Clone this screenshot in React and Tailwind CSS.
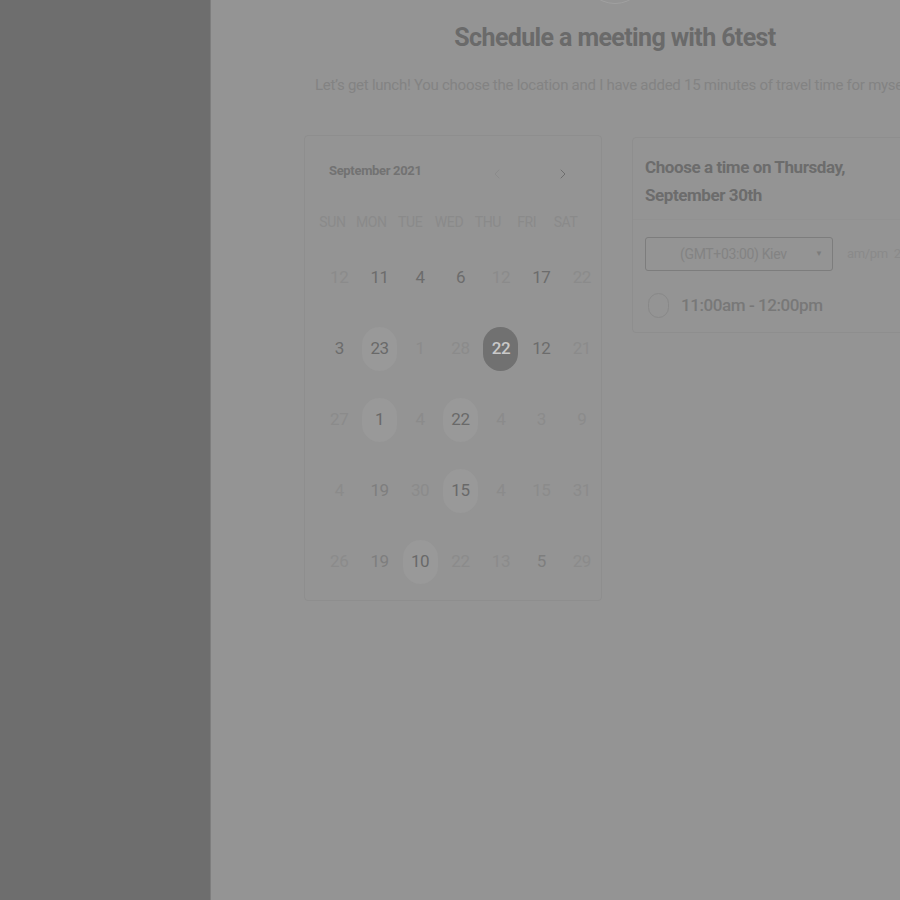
import { ChevronLeft, ChevronRight } from 'lucide-react'

const WEEKDAYS = ['SUN', 'MON', 'TUE', 'WED', 'THU', 'FRI', 'SAT']

// n = available, f = unavailable, m = muted, c = highlighted, s = selected
const WEEKS = [
  [['12', 'f'], ['11', 'n'], ['4', 'n'], ['6', 'n'], ['12', 'f'], ['17', 'n'], ['22', 'f']],
  [['3', 'n'], ['23', 'c'], ['1', 'f'], ['28', 'f'], ['22', 's'], ['12', 'n'], ['21', 'f']],
  [['27', 'f'], ['1', 'c'], ['4', 'f'], ['22', 'c'], ['4', 'f'], ['3', 'f'], ['9', 'f']],
  [['4', 'f'], ['19', 'm'], ['30', 'f'], ['15', 'c'], ['4', 'f'], ['15', 'f'], ['31', 'f']],
  [['26', 'f'], ['19', 'm'], ['10', 'c'], ['22', 'f'], ['13', 'f'], ['5', 'm'], ['29', 'f']],
]

function DayCell({ label, kind }) {
  const styles = {
    n: 'text-[#6c6c6c]',
    f: 'text-[#8b8b8b]',
    m: 'text-[#7e7e7e]',
    c: 'text-[#696969] bg-[#999999]',
    s: 'text-[#c9c9c9] bg-[#717171] font-medium',
  }
  return (
    <div className="h-[71px] flex items-center justify-center">
      <span
        className={`w-[35px] h-[44px] rounded-full flex items-center justify-center text-[17px] tracking-tight ${styles[kind]}`}
      >
        {label}
      </span>
    </div>
  )
}

function CalendarCard() {
  return (
    <div className="w-[298px] shrink-0 h-[466px] border border-[#8e8e8e] rounded-sm">
      {/* Month header */}
      <div className="flex items-center h-[70px] pl-[24px] pr-[30px]">
        <span className="text-[13px] font-bold text-[#727272] tracking-tight">September 2021</span>
        <ChevronLeft className="ml-auto mt-[6px] w-[16px] h-[16px] text-[#8b8b8b]" strokeWidth={1.5} />
        <ChevronRight className="ml-[50px] mt-[6px] w-[16px] h-[16px] text-[#6e6e6e]" strokeWidth={1.5} />
      </div>

      {/* Weekdays */}
      <div className="grid grid-cols-7 w-[280px] pl-[8px] h-[32px] items-center">
        {WEEKDAYS.map((d) => (
          <span key={d} className="text-center text-[14px] text-[#8a8a8a] tracking-tight">
            {d}
          </span>
        ))}
      </div>

      {/* Days */}
      <div className="grid grid-cols-7 w-[298px] pl-[14px] pr-[1px] mt-[4px]">
        {WEEKS.flat().map(([label, kind], i) => (
          <DayCell key={i} label={label} kind={kind} />
        ))}
      </div>
    </div>
  )
}

function TimeCard() {
  return (
    <div className="w-[294px] shrink-0 h-[196px] border border-[#8e8e8e] rounded-sm pl-[12px] pt-[15px] mt-[2px]">
      <h2 className="text-[17px] font-bold leading-[28px] text-[#6c6c6c] tracking-tight">
        Choose a time on Thursday,
        <br />
        September 30th
      </h2>
      <div className="border-t border-[#919191] -ml-[12px] mt-[10px]" />

      <div className="flex items-center mt-[17px]">
        <div className="w-[188px] h-[34px] border border-[#7d7d7d] rounded-[3px] flex items-center pl-[34px] pr-[9px]">
          <span className="text-[14px] text-[#838383] tracking-tight">(GMT+03:00) Kiev</span>
          <span className="ml-auto text-[8px] text-[#7c7c7c]">▼</span>
        </div>
        <span className="ml-[14px] text-[13px] text-[#8a8a8a] tracking-tight whitespace-nowrap">
          am/pm&nbsp;&nbsp;24hr
        </span>
      </div>

      <div className="flex items-center mt-[22px] pl-[3px]">
        <span className="w-[21px] h-[25px] rounded-full border border-[#888888]" />
        <span className="ml-[12px] text-[17px] font-medium text-[#787878] tracking-tight">
          11:00am - 12:00pm
        </span>
      </div>
    </div>
  )
}

export default function App() {
  return (
    <div className="w-[900px] h-[900px] overflow-hidden flex bg-[#949494] font-['Roboto',sans-serif]">
      {/* Sidebar */}
      <aside className="w-[211px] shrink-0 border-r border-[#7e7e7e] bg-[#6e6e6e]" />

      {/* Main */}
      <main className="w-[808px] shrink-0 flex flex-col items-center">
        <div className="w-[64px] h-[64px] -mt-[60px] rounded-full border border-[#a0a0a0]" />
        <h1 className="mt-[15px] text-[25px] font-bold text-[#6a6a6a] tracking-tight">
          Schedule a meeting with 6test
        </h1>
        <p className="mt-[17px] text-[15px] text-[#838383] tracking-[-0.26px] whitespace-nowrap">
          Let’s get lunch! You choose the location and I have added 15 minutes of travel time for myself.
        </p>

        <div className="flex gap-[30px] items-start mt-[39px]">
          <CalendarCard />
          <TimeCard />
        </div>
      </main>
    </div>
  )
}
